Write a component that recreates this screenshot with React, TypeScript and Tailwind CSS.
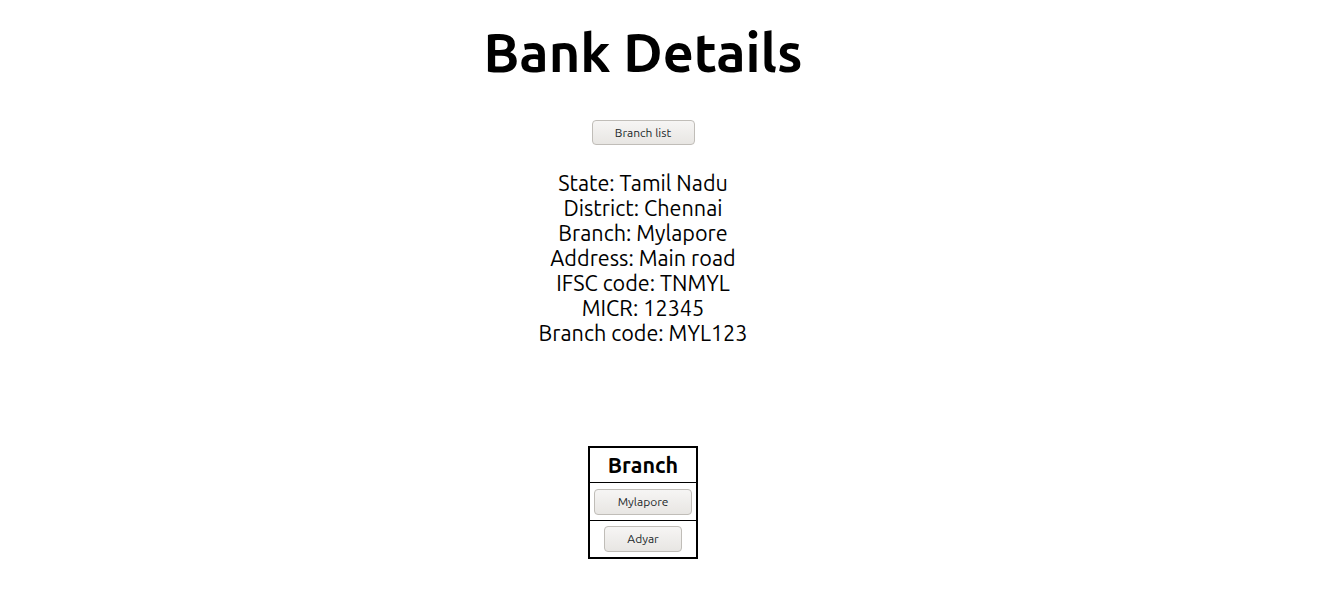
const rows = [
  "State: Tamil Nadu",
  "District: Chennai",
  "Branch: Mylapore",
  "Address: Main road",
  "IFSC code: TNMYL",
  "MICR: 12345",
  "Branch code: MYL123",
];

const branches = ["Mylapore", "Adyar"];

const GtkButton = ({ label, className }: { label: string; className: string }) => (
  <button
    className={`rounded-[4px] border border-[#c0bdb8] bg-gradient-to-b from-[#f6f5f4] to-[#e8e6e3] text-[12px] text-[#22282a] ${className}`}
  >
    {label}
  </button>
);

export default function App() {
  return (
    <div className="flex flex-col items-center bg-white pr-[32px] text-black [font-family:Ubuntu,'Noto_Sans',sans-serif]">
      <h1 className="mt-[22px] text-[54px] font-bold leading-[60px]">
        Bank Details
      </h1>
      <GtkButton label="Branch list" className="mt-[38px] h-[25px] w-[103px]" />
      <div className="mt-[26px] text-center text-[21.6px] leading-[25px]">
        {rows.map((r) => (
          <div key={r}>{r}</div>
        ))}
      </div>
      <table className="mt-[100px] border-collapse border-2 border-black">
        <thead>
          <tr>
            <th className="h-[35px] w-[108px] border-b border-black text-[21.5px] font-bold">
              Branch
            </th>
          </tr>
        </thead>
        <tbody>
          {branches.map((b, i) => (
            <tr key={b}>
              <td
                className={`h-[38px] text-center ${i === 0 ? "border-b border-black" : ""}`}
              >
                <GtkButton
                  label={b}
                  className={i === 0 ? "h-[26px] w-[98px]" : "h-[26px] w-[78px]"}
                />
              </td>
            </tr>
          ))}
        </tbody>
      </table>
    </div>
  );
}
